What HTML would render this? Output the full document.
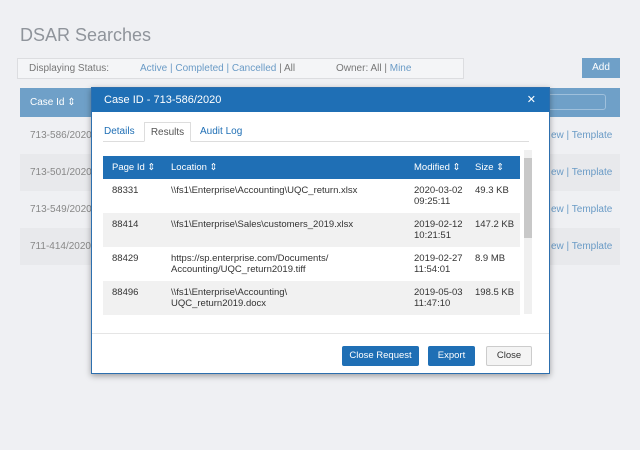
<!DOCTYPE html><html><head><style>
body{margin:0;width:640px;height:450px;background:#eff0f3;font-family:"Liberation Sans",sans-serif;font-size:10px;color:#555;position:relative;overflow:hidden}
.a{position:absolute}
.lk{color:#6a9bc6}
.m{position:absolute;left:91px;top:87px;width:459px;height:287px;background:#fff;border:1px solid #2d6fae;box-sizing:border-box;box-shadow:0 2px 6px rgba(0,0,0,.35)}
.mh{height:24px;background:#1f6fb5;color:#fff;font-size:11px;line-height:24px;padding-left:12px}
table{border-collapse:collapse;position:absolute;left:11px;top:68px;width:417px;font-size:9.5px;color:#333}
th{background:#1f6fb5;color:#fff;font-weight:normal;text-align:left;height:23px;padding:0 0 0 9px}
td{vertical-align:top;padding:6px 0 0 9px;height:34px;line-height:11px;box-sizing:border-box}
tr.g td{background:#f1f1f1}
.b{position:absolute;top:258px;height:20px;line-height:20px;font-size:9.5px;text-align:center;background:#1f6fb5;color:#fff;border-radius:2px}
</style></head><body>
<div class="a" style="left:20px;top:25px;font-size:18px;color:#8f949b">DSAR Searches</div>
<div class="a" style="left:17px;top:58px;width:447px;height:21px;border:1px solid #dcdde0;box-sizing:border-box;background:#f4f5f7;line-height:19px;padding-left:11px;color:#777">Displaying Status:<span class="a" style="left:122px"><span class="lk">Active | Completed | Cancelled</span> | All</span><span class="a" style="left:318px">Owner: All | <span class="lk">Mine</span></span></div>
<div class="a" style="left:582px;top:58px;width:38px;height:20px;background:#6fa0c8;color:#fff;text-align:center;line-height:20px">Add</div>
<div class="a" style="left:20px;top:88px;width:600px;height:29px;background:#6fa0c8;color:#fff;line-height:29px;padding-left:10px;box-sizing:border-box">Case Id ⇕<div class="a" style="left:520px;top:6px;width:66px;height:16px;border:1px solid #9fc0dc;border-radius:3px;box-sizing:border-box"></div></div>
<div class="a" style="left:20px;top:154px;width:600px;height:37px;background:#e8e9ec"></div>
<div class="a" style="left:20px;top:228px;width:600px;height:37px;background:#e8e9ec"></div>
<div class="a" style="left:30px;top:130px;color:#888">713-586/2020</div>
<div class="a" style="left:30px;top:167px;color:#888">713-501/2020</div>
<div class="a" style="left:30px;top:204px;color:#888">713-549/2020</div>
<div class="a" style="left:30px;top:241px;color:#888">711-414/2020</div>
<div class="a lk" style="left:551px;top:130px">ew | Template</div>
<div class="a lk" style="left:551px;top:167px">ew | Template</div>
<div class="a lk" style="left:551px;top:204px">ew | Template</div>
<div class="a lk" style="left:551px;top:241px">ew | Template</div>
<div class="m"><div class="mh">Case ID - 713-586/2020<span class="a" style="right:13px;top:0;font-size:11px;font-weight:lighter">✕</span></div>
<div class="a" style="left:11px;top:53px;width:426px;border-top:1px solid #ddd"></div>
<div class="a" style="left:12px;top:38px;color:#1f6fb5">Details</div>
<div class="a" style="left:52px;top:34px;width:47px;height:20px;border:1px solid #ddd;border-bottom:1px solid #fff;background:#fff;text-align:center;line-height:19px;color:#555;box-sizing:border-box">Results</div>
<div class="a" style="left:108px;top:38px;color:#1f6fb5">Audit Log</div>
<table><tr><th style="width:50px">Page Id ⇕</th><th>Location ⇕</th><th style="width:52px">Modified ⇕</th><th style="width:45px">Size ⇕</th></tr>
<tr><td>88331</td><td>\\fs1\Enterprise\Accounting\UQC_return.xlsx</td><td>2020-03-02<br>09:25:11</td><td>49.3 KB</td></tr>
<tr class="g"><td>88414</td><td>\\fs1\Enterprise\Sales\customers_2019.xlsx</td><td>2019-02-12<br>10:21:51</td><td>147.2 KB</td></tr>
<tr><td>88429</td><td>https://sp.enterprise.com/Documents/<br>Accounting/UQC_return2019.tiff</td><td>2019-02-27<br>11:54:01</td><td>8.9 MB</td></tr>
<tr class="g"><td>88496</td><td>\\fs1\Enterprise\Accounting\<br>UQC_return2019.docx</td><td>2019-05-03<br>11:47:10</td><td>198.5 KB</td></tr></table>
<div class="a" style="left:432px;top:62px;width:8px;height:164px;background:#f0f0f0"><div style="margin-top:8px;height:80px;background:#c8c8c8"></div></div>
<div class="a" style="left:0;top:245px;width:457px;border-top:1px solid #e5e5e5"></div>
<div class="b" style="left:250px;width:77px">Close Request</div>
<div class="b" style="left:336px;width:47px">Export</div>
<div class="b" style="left:394px;width:46px;background:#f4f4f4;color:#333;border:1px solid #ccc;box-sizing:border-box;line-height:18px">Close</div>
</div>
</body></html>
